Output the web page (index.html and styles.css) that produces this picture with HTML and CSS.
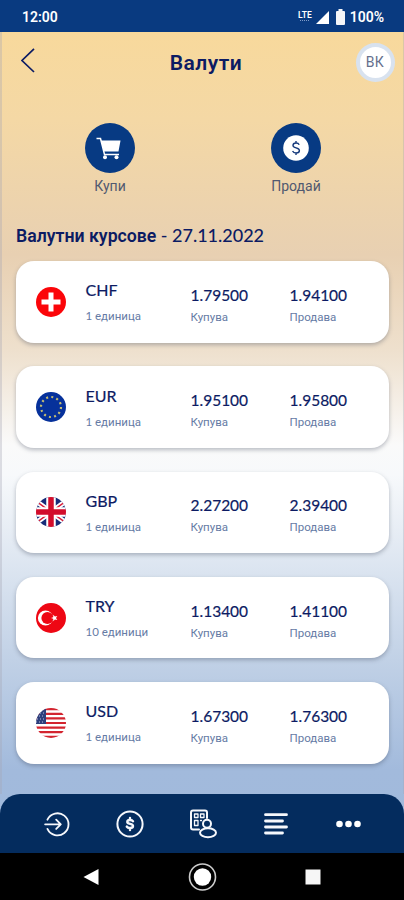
FILE: index.html
```html
<!DOCTYPE html>
<html lang="bg">
<head>
<meta charset="utf-8">
<title>Валути</title>
<link rel="stylesheet" href="styles.css">
</head>
<body>
<div class="screen">
  <div class="status">
    <span class="clock">12:00</span>
    <div class="lte"><span>LTE</span><i></i></div>
    <svg class="signal" width="13" height="13" viewBox="0 0 13 13"><path d="M13 0V13H0Z" fill="#fff"/></svg>
    <svg class="battery" width="9" height="16" viewBox="0 0 9 16"><path d="M2.500 0h4v2H8q1 0 1 1v12q0 1-1 1H1q-1 0-1-1V3q0-1 1-1h1.500Z" fill="#f4f5f8"/></svg>
    <span class="percent">100%</span>
  </div>
  <main>
    <header class="header">
      <svg class="back" width="14" height="25" viewBox="0 0 14 25"><path d="M13 .8 1 12.500 13 24" fill="none" stroke="#0c1b63" stroke-width="1.700"/></svg>
      <h1>Валути</h1>
      <div class="avatar">ВК</div>
    </header>
    <div class="actions">
      <div class="action">
        <div class="disc"><svg width="50" height="50" viewBox="0 0 50 50"><path d="M11.500 15.500h4l4 16h14.500" fill="none" stroke="#fff" stroke-width="1.500"/><path d="M16 17.500h19.500l-2 11H18.800Z" fill="#fff"/><circle cx="20" cy="34.300" r="2" fill="#fff"/><circle cx="31.500" cy="34.300" r="2" fill="#fff"/></svg></div>
        <span>Купи</span>
      </div>
      <div class="action">
        <div class="disc"><svg width="50" height="50" viewBox="0 0 50 50"><circle cx="25" cy="25" r="12.800" fill="#fff"/><path d="M28.200 21.700q-.8-1.700-3.200-1.700-3 0-3 2.400c0 3.200 6.400 1.800 6.400 5.100q0 2.500-3.300 2.500-2.700 0-3.500-2M25 18v2m0 10v2" fill="none" stroke="#163a7c" stroke-width="1.400"/></svg></div>
        <span>Продай</span>
      </div>
    </div>
    <h2>Валутни курсове <span>- 27.11.2022</span></h2>
    <div class="rates">
      <section class="card">
        <svg class="flag" viewBox="0 0 30 30"><circle cx="15" cy="15" r="15" fill="#fb0509"/><path d="M12.500 5.500h5v7h7v5h-7v7h-5v-7h-7v-5h7Z" fill="#fff"/></svg>
        <div class="currency"><b>CHF</b><small><i>1</i> единица</small></div>
        <div class="rate"><b>1.79500</b><small>Купува</small></div>
        <div class="rate"><b>1.94100</b><small>Продава</small></div>
      </section>
      <section class="card">
        <svg class="flag" viewBox="0 0 30 30"><circle cx="15" cy="15" r="15" fill="#06319b"/><circle cx="15" cy="15" r="10" fill="none" stroke="#c5bd72" stroke-width="2.200" stroke-dasharray="2 3.236"/></svg>
        <div class="currency"><b>EUR</b><small><i>1</i> единица</small></div>
        <div class="rate"><b>1.95100</b><small>Купува</small></div>
        <div class="rate"><b>1.95800</b><small>Продава</small></div>
      </section>
      <section class="card">
        <svg class="flag" viewBox="0 0 30 30"><defs><clipPath id="round"><circle cx="15" cy="15" r="15"/></clipPath></defs><g clip-path="url(#round)"><path d="M0 0h30v30H0Z" fill="#172c79"/><path d="M-3 2 33 28M33 2-3 28" stroke="#fff" stroke-width="5"/><path d="M-3 2 33 28M33 2-3 28" stroke="#d91a36" stroke-width="1.500"/><path d="M15 0v30M0 15h30" stroke="#fff" stroke-width="9.500"/><path d="M15 0v30M0 15h30" stroke="#d20d2b" stroke-width="5.500"/></g></svg>
        <div class="currency"><b>GBP</b><small><i>1</i> единица</small></div>
        <div class="rate"><b>2.27200</b><small>Купува</small></div>
        <div class="rate"><b>2.39400</b><small>Продава</small></div>
      </section>
      <section class="card">
        <svg class="flag" viewBox="0 0 30 30"><circle cx="15" cy="15" r="15" fill="#ee0714"/><circle cx="9.500" cy="15" r="7.600" fill="#fff"/><circle cx="11.400" cy="15" r="6" fill="#ee0714"/><path d="m15 15 2.200-.8.100-2.500 1.600 1.900 2.400-.7-1.300 2.100 1.300 2.100-2.400-.7-1.600 1.900-.1-2.500Z" fill="#fff"/></svg>
        <div class="currency"><b>TRY</b><small><i>10</i> единици</small></div>
        <div class="rate"><b>1.13400</b><small>Купува</small></div>
        <div class="rate"><b>1.41100</b><small>Продава</small></div>
      </section>
      <section class="card">
        <svg class="flag" viewBox="0 0 30 30"><g clip-path="url(#round)"><path d="M0 0h30v30H0Z" fill="#fff"/><path d="M0 1.200h30M0 5.800h30M0 10.400h30M0 15h30M0 19.600h30M0 24.200h30M0 28.800h30" stroke="#d3242f" stroke-width="2.200"/><path d="M0 0h10v16H0Z" fill="#2d3f7d"/><path d="M1 5h9M0 8h9M1 11h9M0 14h9" stroke="#b9c2dd" stroke-width="1" stroke-dasharray="1 2"/></g></svg>
        <div class="currency"><b>USD</b><small><i>1</i> единица</small></div>
        <div class="rate"><b>1.67300</b><small>Купува</small></div>
        <div class="rate"><b>1.76300</b><small>Продава</small></div>
      </section>
    </div>
  </main>
  <nav class="tabs">
    <svg width="30" height="30" viewBox="0 0 30 30"><path d="M4.500 10a12 12 0 1 1 0 10M2 15h17M14 10l5 5-5 5" transform="translate(1.300 1.500) scale(.92)"/></svg>
    <svg width="30" height="30" viewBox="0 0 30 30"><circle cx="15" cy="15" r="12.600"/><path stroke-width="2.400" d="M18 12.300q-.7-1.300-3-1.300-2.700 0-2.700 2c0 2.600 5.700 1.300 5.700 4q0 2-3 2-2.500 0-3.200-1.400M15 9v2m0 8v2"/></svg>
    <svg width="30" height="30" viewBox="0 0 30 30"><path d="M11 20.500H5q-2 0-2-2v-15q0-2 2-2h12q2 0 2 2V9"/><path stroke-width="1.300" d="M6.500 5h3.500v3.500H6.500ZM12.500 5H16v3.500h-3.500ZM6.500 11.500h3.500v5H6.500ZM12.500 11.500h1"/><circle cx="19" cy="14.700" r="4"/><ellipse cx="20" cy="23.700" rx="8" ry="4.500"/></svg>
    <svg width="30" height="30" viewBox="0 0 30 30"><path stroke-width="2.800" d="M5.500 5.700h21M5.500 12h17M5.500 18h21M5.500 24h17"/></svg>
    <svg width="30" height="30" viewBox="0 0 30 30"><g fill="#fff" stroke="none"><circle cx="6.500" cy="15" r="3.300"/><circle cx="15.500" cy="15" r="3.300"/><circle cx="24.500" cy="15" r="3.300"/></g></svg>
  </nav>
  <div class="system">
    <svg width="30" height="30" viewBox="0 0 30 30"><path d="M7.500 15 22.500 7v16Z" fill="#fff"/></svg>
    <svg width="30" height="30" viewBox="0 0 30 30"><circle cx="15.500" cy="15" r="13" fill="none" stroke="#ccc" stroke-width="1.600"/><circle cx="15.500" cy="15" r="8.700" fill="#fff"/></svg>
    <svg width="30" height="30" viewBox="0 0 30 30"><path d="M7.500 7.500h15v15h-15Z" fill="#f6f6f6"/></svg>
  </div>
</div>
</body>
</html>
```
FILE: styles.css
```css
* { box-sizing: border-box; }
body { margin: 0; font-family: Roboto, sans-serif; color: #0c1b63; }
.screen {
  width: 404px; height: 900px; display: flex; flex-direction: column; overflow: hidden;
  background: linear-gradient(#f8d99c 32px, #f4d8a5 120px, #e8d0b2 255px, #eee0cd 350px, #fafafa 445px, #f7f9fb 475px, #c1d1e6 660px, #a2badc 770px, #a0b9dc 853px);
}
.status { height: 32px; flex: none; display: flex; align-items: center; padding: 2px 20px 0 22px; background: #093a80; color: #fff; font-size: 14px; font-weight: 600; }
.clock { flex: 1; }
.lte { display: flex; flex-direction: column; align-items: center; font: 600 8.500px/8px Roboto, sans-serif; padding-bottom: 3px; }
.lte i { width: 9px; margin-top: 1px; border-top: 1px dotted #7f9bc8; }
.signal { margin-left: 4px; }
.battery { margin: 0 5px 0 7px; }
main { flex: 1; padding: 0 14px; border-left: 2px solid rgba(165,165,180,.35); border-right: 1px solid rgba(165,165,180,.35); }
.header { height: 60px; display: grid; grid-template-columns: 40px 1fr 40px; align-items: center; }
.back { margin: -4px 0 0 5px; }
h1 { margin: 1px 0 0 7px; text-align: center; font-size: 21px; font-weight: 600; letter-spacing: .5px; }
.avatar { width: 39px; height: 39px; margin-left: 6.500px; border: 4px solid #d8e2ef; border-radius: 50%; background: #fff; color: #65708d; display: grid; place-items: center; font-size: 14px; letter-spacing: .3px; }
.actions { display: flex; justify-content: space-between; margin: 31px 43px 0 44px; }
.action { width: 100px; display: flex; flex-direction: column; align-items: center; font-size: 14px; line-height: 18px; color: #515970; }
.disc { width: 50px; height: 50px; border-radius: 50%; background: #073a83; margin-bottom: 4px; }
.disc svg { display: block; }
h2 { margin: 29px 0 13px; font-size: 17.700px; line-height: 23px; font-weight: 600; white-space: nowrap; }
h2 span { font-family: Lato, sans-serif; font-weight: 500; font-size: 18px; }
.rates { display: grid; gap: 23.800px; }
.card { height: 81.500px; display: grid; grid-template-columns: 50px 105px 99px 1fr; align-items: center; padding-left: 19.500px; border-radius: 18px; background: #fff; box-shadow: 0 2px 4px rgba(60,70,90,.35); }
.flag { width: 30px; height: 30px; }
.card b { display: block; font: 400 16px/20px Lato, sans-serif; -webkit-text-stroke: .2px #0c1b63; }
.card small { display: block; font-size: 11.500px; line-height: 14px; color: #667ba5; }
.card i { font-family: Lato, sans-serif; font-style: normal; }
.currency small { margin-top: 9px; }
.currency { padding-bottom: 0; }
.rate { padding-top: 5px; }
.card .rate b { font-size: 15.500px; }
.rate small { margin-top: 5px; }
.tabs { height: 59px; flex: none; display: flex; justify-content: space-between; align-items: center; padding: 0 41px 0 42px; border-radius: 20px 20px 0 0; background: #042c5e; }
.tabs svg { fill: none; stroke: #f6f8fc; stroke-width: 2; stroke-linecap: round; stroke-linejoin: round; }
.system { height: 47px; flex: none; display: flex; justify-content: space-between; align-items: center; padding: 1px 76px 0; background: #000; }
```
